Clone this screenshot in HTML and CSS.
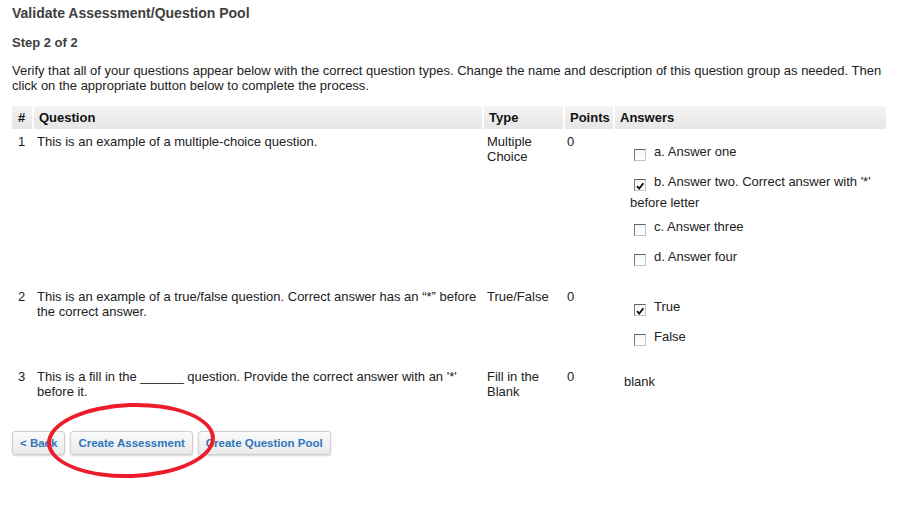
FILE: index.html
```html
<!DOCTYPE html>
<html>
<head>
<meta charset="utf-8">
<link rel="stylesheet" href="styles.css">
</head>
<body>
<div class="page">
  <h1 class="title">Validate Assessment/Question Pool</h1>
  <h2 class="step">Step 2 of 2</h2>
  <p class="intro">Verify that all of your questions appear below with the correct question types. Change the name and description of this question group as needed. Then click on the appropriate button below to complete the process.</p>

  <table class="qtable">
    <colgroup>
      <col class="c-num"><col class="c-q"><col class="c-type"><col class="c-pts"><col class="c-ans">
    </colgroup>
    <thead>
      <tr><th>#</th><th>Question</th><th>Type</th><th>Points</th><th class="th-ans">Answers</th></tr>
    </thead>
    <tbody>
      <tr>
        <td>1</td>
        <td>This is an example of a multiple-choice question.</td>
        <td>Multiple Choice</td>
        <td class="pts">0</td>
        <td>
          <div class="answers">
            <div class="ans"><span class="cb"></span>a. Answer one</div>
            <div class="ans"><span class="cb checked"><svg viewBox="0 0 10 10" width="10" height="10"><path d="M2 5.2 L4.2 7.6 L8.4 2.2" fill="none" stroke="#111" stroke-width="1.8"/></svg></span>b. Answer two. Correct answer with '*' before letter</div>
            <div class="ans after-wrap"><span class="cb"></span>c. Answer three</div>
            <div class="ans"><span class="cb"></span>d. Answer four</div>
          </div>
        </td>
      </tr>
      <tr>
        <td>2</td>
        <td>This is an example of a true/false question. Correct answer has an “*” before the correct answer.</td>
        <td>True/False</td>
        <td class="pts">0</td>
        <td>
          <div class="answers">
            <div class="ans"><span class="cb checked"><svg viewBox="0 0 10 10" width="10" height="10"><path d="M2 5.2 L4.2 7.6 L8.4 2.2" fill="none" stroke="#111" stroke-width="1.8"/></svg></span>True</div>
            <div class="ans"><span class="cb"></span>False</div>
          </div>
        </td>
      </tr>
      <tr>
        <td>3</td>
        <td>This is a fill in the ______ question. Provide the correct answer with an '*' before it.</td>
        <td>Fill in the Blank</td>
        <td class="pts">0</td>
        <td><div class="blank">blank</div></td>
      </tr>
    </tbody>
  </table>

  <div class="actions">
    <button class="btn">&lt; Back</button>
    <button class="btn">Create Assessment</button>
    <button class="btn">Create Question Pool</button>
    <div class="circle"></div>
  </div>
</div>
</body>
</html>
```

FILE: styles.css
```css
* { box-sizing: border-box; }
html, body { margin: 0; padding: 0; background: #fff; }
body {
  font-family: "Liberation Sans", Arial, Helvetica, sans-serif;
  font-size: 13px;
  line-height: 15px;
  color: #222;
}
.page {
  padding: 4px 15px 0 12px;
  min-height: 511px;
}
.title {
  margin: 0;
  font-size: 14px;
  line-height: 18px;
  font-weight: bold;
  color: #404040;
}
.step {
  margin: 13px 0 0;
  font-size: 13px;
  line-height: 15px;
  font-weight: bold;
  color: #404040;
}
.intro {
  margin: 13px 0 0;
  color: #222;
}
.qtable {
  margin: 13px 0 0 -2px;
  border-collapse: separate;
  border-spacing: 2px 0;
  table-layout: fixed;
  width: 878px;
}
.c-num { width: 20px; }
.c-q { width: 448px; }
.c-type { width: 79px; }
.c-pts { width: 48px; }
.c-ans { width: 271px; }
.qtable th {
  text-align: left;
  font-weight: bold;
  color: #111;
  height: 23px;
  padding: 0 5px;
  background: linear-gradient(#f3f3f3, #e6e6e6);
  vertical-align: middle;
}
.qtable th:first-child { padding-left: 6px; }
.qtable th.th-ans { padding-left: 5px; }
.qtable td {
  vertical-align: top;
  padding: 5px 4px 4px 3px;
}
.qtable td:first-child { padding-left: 6px; }
.qtable td.pts { padding-left: 2px; }
.answers {
  padding: 7px 0 13px 12px;
}
.ans {
  line-height: 21px;
}
.ans + .ans { margin-top: 9px; }
.ans.after-wrap { margin-top: 3px; }
.cb {
  display: inline-block;
  width: 12px;
  height: 12px;
  margin: 0 8px 0 4px;
  vertical-align: -5px;
  border-top: 1px solid #666;
  border-left: 1px solid #777;
  border-right: 1px solid #c4c4c4;
  border-bottom: 1px solid #c4c4c4;
  background: linear-gradient(#f6f6f6, #fff);
  position: relative;
}
.cb svg {
  position: absolute;
  left: 0;
  top: 1px;
}
.blank {
  padding: 0 0 0 6px;
  line-height: 21px;
  margin-top: 2px;
}
.actions {
  position: relative;
  display: flex;
  gap: 5px;
  margin-top: 28px;
}
.btn {
  font-family: "Liberation Sans", Arial, Helvetica, sans-serif;
  font-size: 11.5px;
  font-weight: bold;
  color: #2f76bb;
  height: 24px;
  padding: 0 7px;
  border: 1px solid #cfcfcf;
  border-radius: 3px;
  background: linear-gradient(#fbfbfb, #e9e9e9);
  box-shadow: 0 1px 2px rgba(0,0,0,0.18);
}
.circle {
  position: absolute;
  left: 35px;
  top: -28px;
  width: 168px;
  height: 75px;
  border: 4px solid #ec1c2b;
  border-radius: 50%;
  transform: rotate(-2deg);
  pointer-events: none;
}
```
